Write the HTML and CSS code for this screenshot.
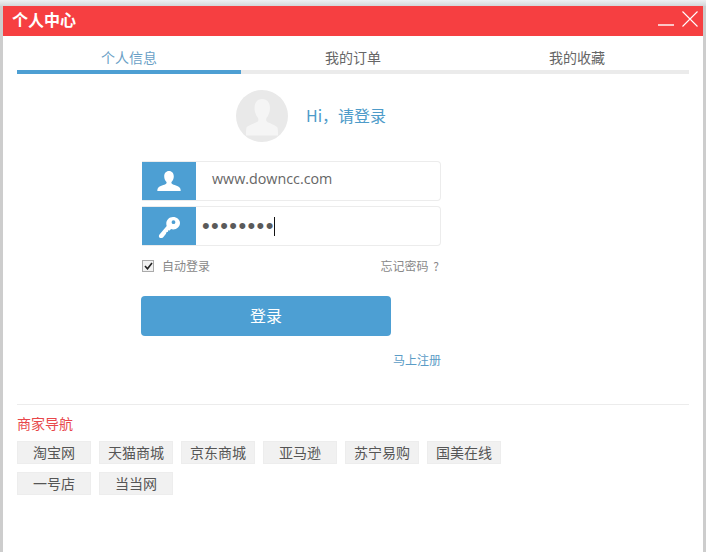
FILE: index.html
```html
<!DOCTYPE html>
<html lang="zh-CN">
<head>
<meta charset="utf-8">
<title>个人中心</title>
<link rel="stylesheet" href="styles.css">
</head>
<body>
<div class="window">
  <header class="titlebar">
    <h1 class="title">个人中心</h1>
    <div class="controls">
      <svg class="ctl-min" width="16" height="2" viewBox="0 0 16 2"><rect width="16" height="1.4" y="0.3" fill="#fff"/></svg>
      <svg class="ctl-close" width="16" height="16" viewBox="0 0 16 16"><path d="M0.5 0.5L15.5 15.5M15.5 0.5L0.5 15.5" stroke="#fff" stroke-width="1.1" fill="none"/></svg>
    </div>
  </header>
  <nav class="tabs">
    <div class="tab active">个人信息</div>
    <div class="tab">我的订单</div>
    <div class="tab">我的收藏</div>
  </nav>
  <main class="login">
    <div class="hero">
      <svg class="avatar" width="52" height="52" viewBox="0 0 52 52">
        <circle cx="26" cy="26" r="26" fill="#e9e9e9"/>
        <path d="M26 9c-5 0-7.500 4-7.500 9 0 4 1.500 7.500 3.500 10 .6 1 .5 3-.5 3.800C18 33.500 12 35.500 10.500 37.500 10 39 10 42 10 45.500h32c0-3.500 0-6.500-.5-8C40 35.500 34 33.500 31 31.800c-1-.8-1.100-2.800-.5-3.800 2-2.500 3.500-6 3.500-10 0-5-2.500-9-8-9z" fill="#f5f5f5"/>
      </svg>
      <span class="greeting">Hi，请登录</span>
    </div>
    <div class="field">
      <span class="field-icon">
        <svg width="24" height="20" viewBox="0 0 24 20"><path d="M12 0c-3 0-4.800 2.300-4.800 5.200 0 2.300.9 4.300 2.100 5.600.5.600.4 1.600-.2 2C7.500 14 2.500 15 1 17c-.5.800-.7 1.800-.7 3h23.400c0-1.200-.2-2.200-.7-3-1.500-2-6.500-3-8.100-4.200-.6-.4-.7-1.400-.2-2 1.200-1.300 2.100-3.300 2.100-5.600C16.800 2.300 15 0 12 0z" fill="#fff"/></svg>
      </span>
      <span class="field-value">www.downcc.com</span>
    </div>
    <div class="field">
      <span class="field-icon">
        <svg class="key" width="22" height="21" viewBox="0 0 22 21"><path fill-rule="evenodd" d="M15 0c3.900 0 7 2.700 7 6 0 3.500-3 6.500-6.800 6.500-.8 0-1.500-.1-2.200-.4l-1.300 1.300-1.500-.1-.2 1.500-1.600.4-.4 1.600-3 3.600c-.8.900-2.700 1-3.600.2-.8-.8-.6-2.100.1-3L8.700 9C8.400 8.200 8.300 7.400 8.300 6.600 8.300 2.900 11.200 0 15 0zM15.500 3.300a1.900 1.900 0 1 0 0 3.800 1.900 1.900 0 0 0 0-3.800z" fill="#fff"/></svg>
      </span>
      <span class="field-value password"><span class="dots">••••••••</span><span class="caret"></span></span>
    </div>
    <div class="options">
      <label class="remember">
        <span class="checkbox">
          <svg width="9" height="8" viewBox="0 0 9 8"><path d="M1 4l2.500 2.800L8 1" stroke="#222" stroke-width="1.600" fill="none"/></svg>
        </span>
        <span class="option-text">自动登录</span>
      </label>
      <span class="option-text forgot">忘记密码 ?</span>
    </div>
    <button class="submit" type="button">登录</button>
    <div class="register">马上注册</div>
  </main>
  <section class="shops">
    <h2 class="shops-title">商家导航</h2>
    <div class="shop-grid">
      <span class="shop">淘宝网</span>
      <span class="shop">天猫商城</span>
      <span class="shop">京东商城</span>
      <span class="shop">亚马逊</span>
      <span class="shop">苏宁易购</span>
      <span class="shop">国美在线</span>
      <span class="shop">一号店</span>
      <span class="shop">当当网</span>
    </div>
  </section>
</div>
</body>
</html>
```

FILE: styles.css
```css
* { box-sizing: border-box; }
html, body { margin: 0; height: 100%; }
body {
  width: 706px;
  height: 552px;
  overflow: hidden;
  padding: 6px 3px 0;
  background: linear-gradient(#eef0f2, #d4d6d8 6px, #cdcdcd 6px);
  font-family: "Noto Sans CJK SC", "Open Sans", sans-serif;
  color: #555;
}
.window { width: 700px; height: 546px; background: #fff; }

.titlebar {
  height: 30px;
  background: #f63f41;
  display: flex;
  align-items: center;
  justify-content: space-between;
  padding: 0 5px 0 9px;
}
.title { margin: 0 0 4px; font-size: 16px; font-weight: 700; line-height: 26px; color: #fff; }
.controls { display: flex; align-items: flex-start; gap: 8px; height: 30px; }
.ctl-min { margin-top: 18px; }
.ctl-close { margin-top: 5px; }

.tabs { display: grid; grid-template-columns: repeat(3, 224px); margin: 0 14px; padding-top: 11px; }
.tab {
  font-size: 14px;
  line-height: 20px;
  text-align: center;
  padding-bottom: 3px;
  border-bottom: 4px solid #ebebeb;
  color: #666;
}
.tab.active { color: #6a9fc6; border-bottom-color: #4d9fd3; }

.login { width: 300px; margin-left: 138px; }
.hero { display: flex; align-items: center; gap: 18px; margin: 16px 0 19px 95px; height: 52px; }
.avatar { display: block; }
.greeting { font-size: 16px; padding-bottom: 2px; color: #4d9bc9; }

.field {
  display: flex;
  width: 299px;
  height: 40px;
  margin: 0 0 5px 1px;
  background: #fff;
  border: 1px solid #ececec;
  border-left: 0;
  border-radius: 0 4px 4px 0;
}
.field-icon {
  width: 54px;
  flex: none;
  background: #4d9fd3;
  display: flex;
  align-items: center;
  justify-content: center;
}
.key { margin-top: 3px; }
.field-value {
  padding-left: 16px;
  font-family: "Open Sans", sans-serif;
  font-size: 14.300px;
  line-height: 33px;
  color: #666;
}
.password { display: flex; align-items: center; height: 38px; padding-left: 6px; }
.dots {
  font-family: "Liberation Sans", sans-serif;
  font-size: 22px;
  letter-spacing: 1.400px;
  color: #5a5a5a;
  line-height: 38px;
}
.caret { width: 1px; height: 19px; margin-left: -1px; background: #111; }

.options {
  display: flex;
  justify-content: space-between;
  align-items: center;
  height: 20px;
  margin: 10px 2px 20px 1px;
  font-size: 12px;
  color: #888;
}
.remember { display: flex; align-items: center; gap: 8px; }
.option-text { padding-bottom: 2px; }
.forgot { word-spacing: 2px; }
.checkbox {
  width: 12px;
  height: 12px;
  border: 1px solid #aaa;
  background: #f2f2f2;
  display: flex;
  align-items: center;
  justify-content: center;
}
.submit {
  display: block;
  width: 250px;
  height: 40px;
  padding: 0 0 2px;
  border: 0;
  border-radius: 4px;
  background: #4d9fd3;
  color: #fff;
  font: 400 16px "Noto Sans CJK SC", sans-serif;
}
.register { margin-top: 14px; font-size: 12px; line-height: 20px; text-align: right; color: #5b9cc6; }

.shops { margin: 34px 14px 0; border-top: 1px solid #ececec; padding-top: 8px; }
.shops-title { margin: 0; font-size: 14px; font-weight: 400; line-height: 20px; color: #e8474a; }
.shop-grid { display: grid; grid-template-columns: repeat(6, 74px); gap: 8px; margin-top: 8px; }
.shop {
  height: 23px;
  background: #f1f1f1;
  border: 1px solid #ededed;
  font-size: 14px;
  line-height: 21px;
  text-align: center;
  color: #555;
}
```
